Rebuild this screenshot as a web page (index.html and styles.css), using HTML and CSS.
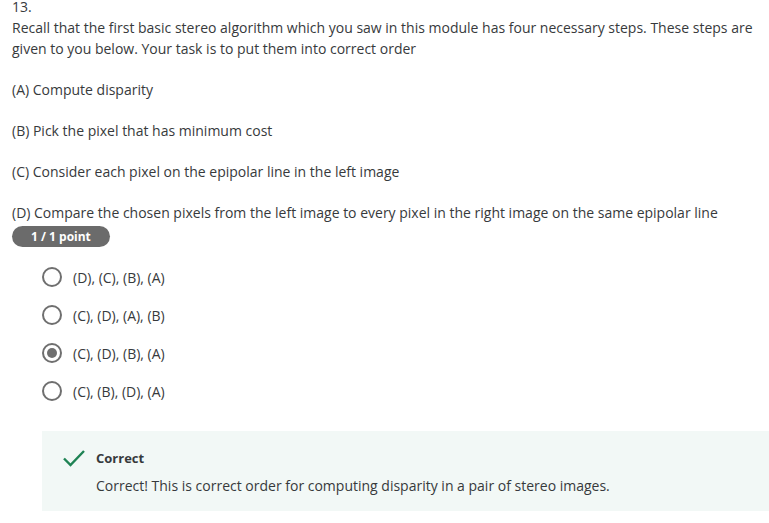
FILE: index.html
```html
<!DOCTYPE html>
<html>
<head>
<meta charset="utf-8">
<link rel="stylesheet" href="styles.css">
</head>
<body>
<div class="question">
  <div class="num">13.</div>
  <p class="prompt">Recall that the first basic stereo algorithm which you saw in this module has four necessary steps. These steps are given to you below. Your task is to put them into correct order</p>
  <p class="step">(A) Compute disparity</p>
  <p class="step">(B) Pick the pixel that has minimum cost</p>
  <p class="step">(C) Consider each pixel on the epipolar line in the left image</p>
  <p class="step last">(D) Compare the chosen pixels from the left image to every pixel in the right image on the same epipolar line</p>
  <div class="badge">1 / 1 point</div>
  <ul class="options">
    <li class="option"><span class="radio"></span><span>(D), (C), (B), (A)</span></li>
    <li class="option"><span class="radio"></span><span>(C), (D), (A), (B)</span></li>
    <li class="option"><span class="radio checked"></span><span>(C), (D), (B), (A)</span></li>
    <li class="option"><span class="radio"></span><span>(C), (B), (D), (A)</span></li>
  </ul>
  <div class="feedback">
    <svg class="check" width="24" height="20" viewBox="0 0 24 20"><path d="M2 10.5 L8.5 17 L22 3" fill="none" stroke="#1f8354" stroke-width="2.4"/></svg>
    <div class="fb-text">
      <div class="fb-title">Correct</div>
      <div class="fb-body">Correct! This is correct order for computing disparity in a pair of stereo images.</div>
    </div>
  </div>
</div>
</body>
</html>
```
FILE: styles.css
```css
html, body {
  margin: 0;
  padding: 0;
  background: #fff;
}
body {
  font-family: "Open Sans", "Liberation Sans", sans-serif;
  font-size: 14px;
  line-height: 21px;
  color: #373a3c;
}
.question {
  padding: 0 0 0 12px;
  margin-top: -4px;
}
.num, .prompt {
  margin: 0;
}
.prompt {
  margin-bottom: 20px;
}
.step {
  margin: 0 0 20px 0;
}
.step.last {
  margin-bottom: 0;
}
.badge {
  display: inline-block;
  margin-top: 3px;
  background: #6b6b6b;
  color: #fff;
  font-weight: 700;
  font-size: 12px;
  line-height: 21px;
  padding: 0 19px;
  border-radius: 11px;
}
.options {
  list-style: none;
  margin: 11px 0 0 0;
  padding: 0 0 0 30px;
}
.option {
  display: flex;
  align-items: center;
  gap: 11px;
  height: 38px;
  font-size: 14px;
}
.radio {
  width: 16px;
  height: 16px;
  border: 2px solid #6f6f6f;
  border-radius: 50%;
  display: flex;
  align-items: center;
  justify-content: center;
}
.radio.checked::after {
  content: "";
  width: 10px;
  height: 10px;
  border-radius: 50%;
  background: #6f6f6f;
}
.feedback {
  margin: 21px 0 0 30px;
  background: #f2f8f6;
  display: flex;
  gap: 10px;
  padding: 17px 0 15px 20px;
}
.fb-title {
  font-weight: 700;
  font-size: 13px;
  line-height: 21px;
  margin-bottom: 6px;
}
.fb-body {
  line-height: 21px;
}
```
